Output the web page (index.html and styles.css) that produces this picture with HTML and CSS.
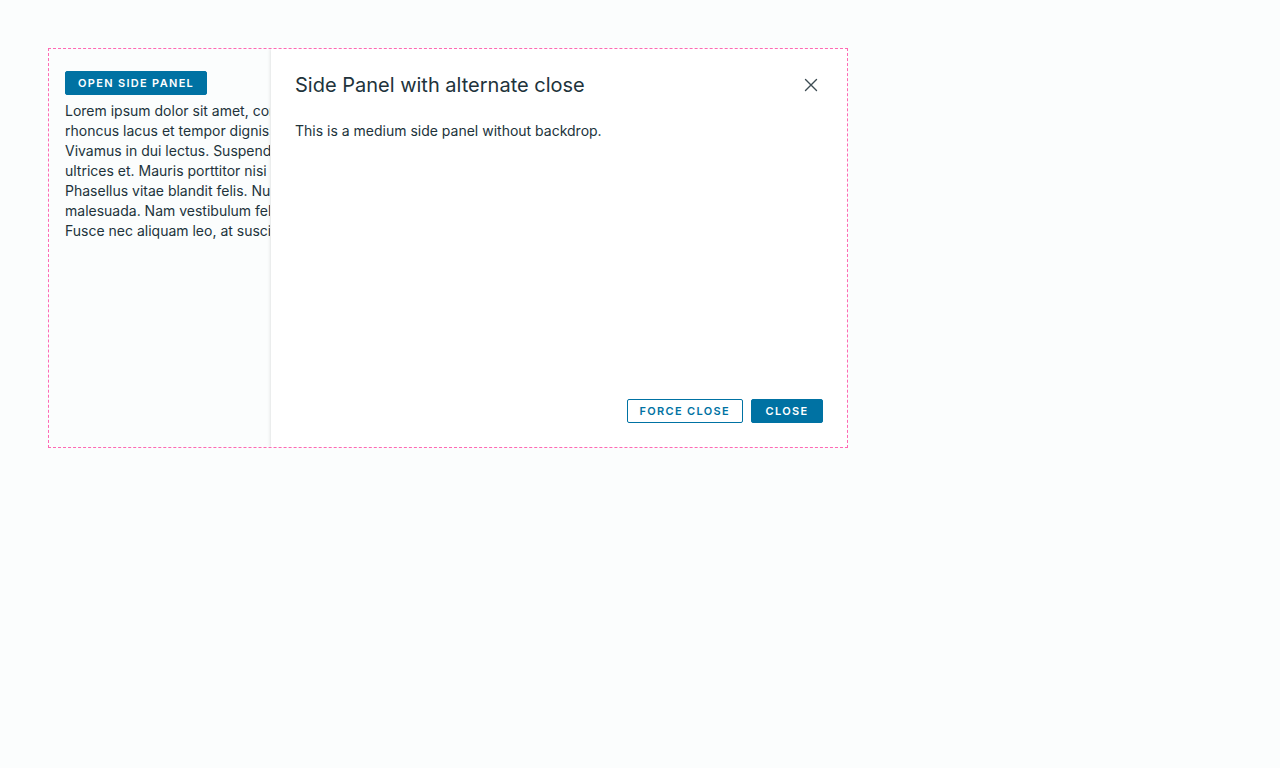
FILE: index.html
```html
<!DOCTYPE html>
<html>
<head>
<meta charset="utf-8">
<link rel="stylesheet" href="styles.css">
</head>
<body>
<div class="demo">
  <button class="btn btn-solid">Open side panel</button>
  <p class="lorem">Lorem ipsum dolor sit amet, consectetur adipiscing elit. Nam sed purus id nulla cursus viverra et vel nunc. Donec<br>rhoncus lacus et tempor dignissim. Integer eleifend, nulla sed euismod ullamcorper, eros sapien finibus dolor, nec<br>Vivamus in dui lectus. Suspendisse potenti. Etiam vel tellus at nisl tempus sollicitudin vitae sed nunc, sed<br>ultrices et. Mauris porttitor nisi nec leo convallis, non pulvinar justo efficitur. Aliquam erat volutpat quis.<br>Phasellus vitae blandit felis. Nulla facilisi. Curabitur luctus, ipsum eget fermentum hendrerit, lectus nibh<br>malesuada. Nam vestibulum felis ut risus vulputate, id tincidunt mi pretium. Morbi vel nulla at massa mollis.<br>Fusce nec aliquam leo, at suscipit ante. Donec ac eros et ex elementum interdum in sed tortor.</p>
  <aside class="panel">
    <header class="panel-header">
      <h2 class="panel-title">Side Panel with alternate close</h2>
      <button class="close" aria-label="Close">
        <svg width="16" height="16" viewBox="0 0 16 16"><path d="M2.5 2.5 L13.5 13.5 M13.5 2.5 L2.5 13.5" stroke="#3d4c53" stroke-width="1.4" fill="none" stroke-linecap="round"/></svg>
      </button>
    </header>
    <div class="panel-body">This is a medium side panel without backdrop.</div>
    <footer class="panel-footer">
      <button class="btn btn-outline">Force close</button>
      <button class="btn btn-solid">Close</button>
    </footer>
  </aside>
</div>
</body>
</html>
```
FILE: styles.css
```css
html, body {
  margin: 0;
  padding: 0;
  background: #fbfdfd;
}
body {
  padding: 48px;
  font-family: Inter, "Open Sans", sans-serif;
  color: #21333b;
}
.demo {
  position: relative;
  width: 766px;
  height: 376px;
  padding: 22px 16px 0 16px;
  border: 1px dashed #ff69b4;
  overflow: hidden;
}
.btn {
  display: inline-flex;
  align-items: center;
  justify-content: center;
  box-sizing: border-box;
  height: 24px;
  min-width: 72px;
  padding: 0 12px;
  border-radius: 2px;
  font-family: Inter, sans-serif;
  font-size: 11px;
  font-weight: 600;
  letter-spacing: 0.12em;
  text-transform: uppercase;
  cursor: pointer;
}
.btn-solid {
  background: #0072a3;
  border: 1px solid #0072a3;
  color: #fff;
}
.btn-outline {
  background: #fff;
  border: 1px solid #0072a3;
  color: #0072a3;
}
.lorem {
  margin: 6px 0 0;
  width: 205px;
  overflow: hidden;
  font-size: 14px;
  line-height: 20px;
  white-space: nowrap;
}
.panel {
  position: absolute;
  top: 0;
  right: 0;
  bottom: 0;
  width: 576px;
  background: #fff;
  box-shadow: -1px 0 3px rgba(0, 0, 0, 0.1);
  display: flex;
  flex-direction: column;
  box-sizing: border-box;
  padding: 24px;
}
.panel-header {
  display: flex;
  align-items: center;
  justify-content: space-between;
  height: 24px;
}
.panel-title {
  margin: 0;
  font-size: 20px;
  line-height: 24px;
  font-weight: 400;
}
.close {
  width: 24px;
  height: 24px;
  padding: 0;
  border: 0;
  background: none;
  display: flex;
  align-items: center;
  justify-content: center;
  cursor: pointer;
}
.panel-body {
  margin-top: 24px;
  font-size: 14px;
  line-height: 20px;
  flex: 1;
}
.panel-footer {
  display: flex;
  justify-content: flex-end;
  gap: 8px;
}
```
